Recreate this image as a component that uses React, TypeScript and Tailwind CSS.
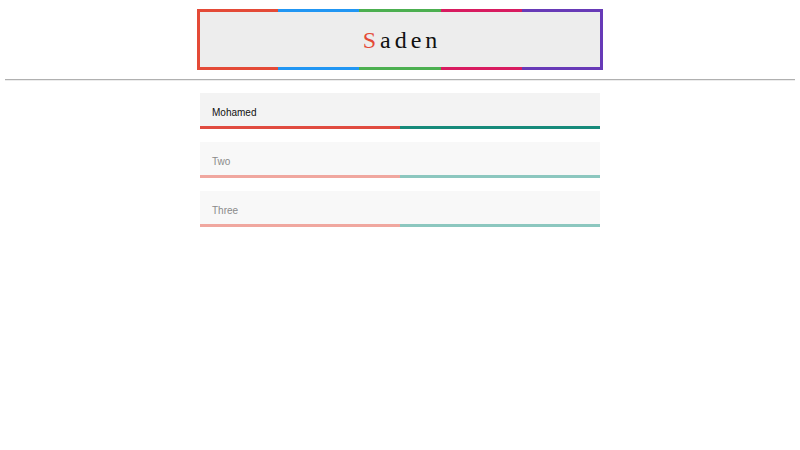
const headerColors = ['bg-[#e44a37]', 'bg-[#2196f3]', 'bg-[#4caf50]', 'bg-[#d81b60]', 'bg-[#673ab7]']

const fields = [
  { value: 'Mohamed', placeholder: '', active: true },
  { value: '', placeholder: 'Two', active: false },
  { value: '', placeholder: 'Three', active: false },
]

function ColorRow() {
  return (
    <div className="flex h-[3px]">
      {headerColors.map((c) => (
        <div key={c} className={`flex-1 ${c}`} />
      ))}
    </div>
  )
}

function Field({ value, placeholder, active }: { value: string; placeholder: string; active: boolean }) {
  return (
    <div className="flex flex-col w-[400px]">
      <div
        className={`h-[33px] flex items-center px-[12px] pt-[5px] text-[10px] font-['Liberation_Sans',Arial,sans-serif] ${
          active ? 'bg-[#f3f3f3] text-[#111]' : 'bg-[#f8f8f8] text-[#8a8a8a]'
        }`}
      >
        {value || placeholder}
      </div>
      <div className="flex h-[3px]">
        <div className={`flex-1 ${active ? 'bg-[#e04b3f]' : 'bg-[#f0a79f]'}`} />
        <div className={`flex-1 ${active ? 'bg-[#168a7a]' : 'bg-[#8cc7bf]'}`} />
      </div>
    </div>
  )
}

export default function App() {
  return (
    <div className="w-[800px] h-[450px] bg-white flex flex-col items-center">
      <div className="mt-[9px] w-[406px] flex flex-col">
        <ColorRow />
        <div className="flex h-[55px]">
          <div className="w-[3px] bg-[#e44a37]" />
          <div className="flex-1 bg-[#ededed] flex items-center justify-center pl-[4px]">
            <span className="font-['Liberation_Serif','Times_New_Roman',serif] text-[24px] tracking-[4px] text-[#111]">
              <span className="text-[#e44a37]">S</span>aden
            </span>
          </div>
          <div className="w-[3px] bg-[#673ab7]" />
        </div>
        <ColorRow />
      </div>
      <div className="mt-[9px] self-stretch mx-[5px] border-t border-[#b0b0b0] border-b border-b-[#ececec]" />
      <div className="mt-[12px] flex flex-col gap-[13px]">
        {fields.map((f) => (
          <Field key={f.placeholder || f.value} {...f} />
        ))}
      </div>
    </div>
  )
}
